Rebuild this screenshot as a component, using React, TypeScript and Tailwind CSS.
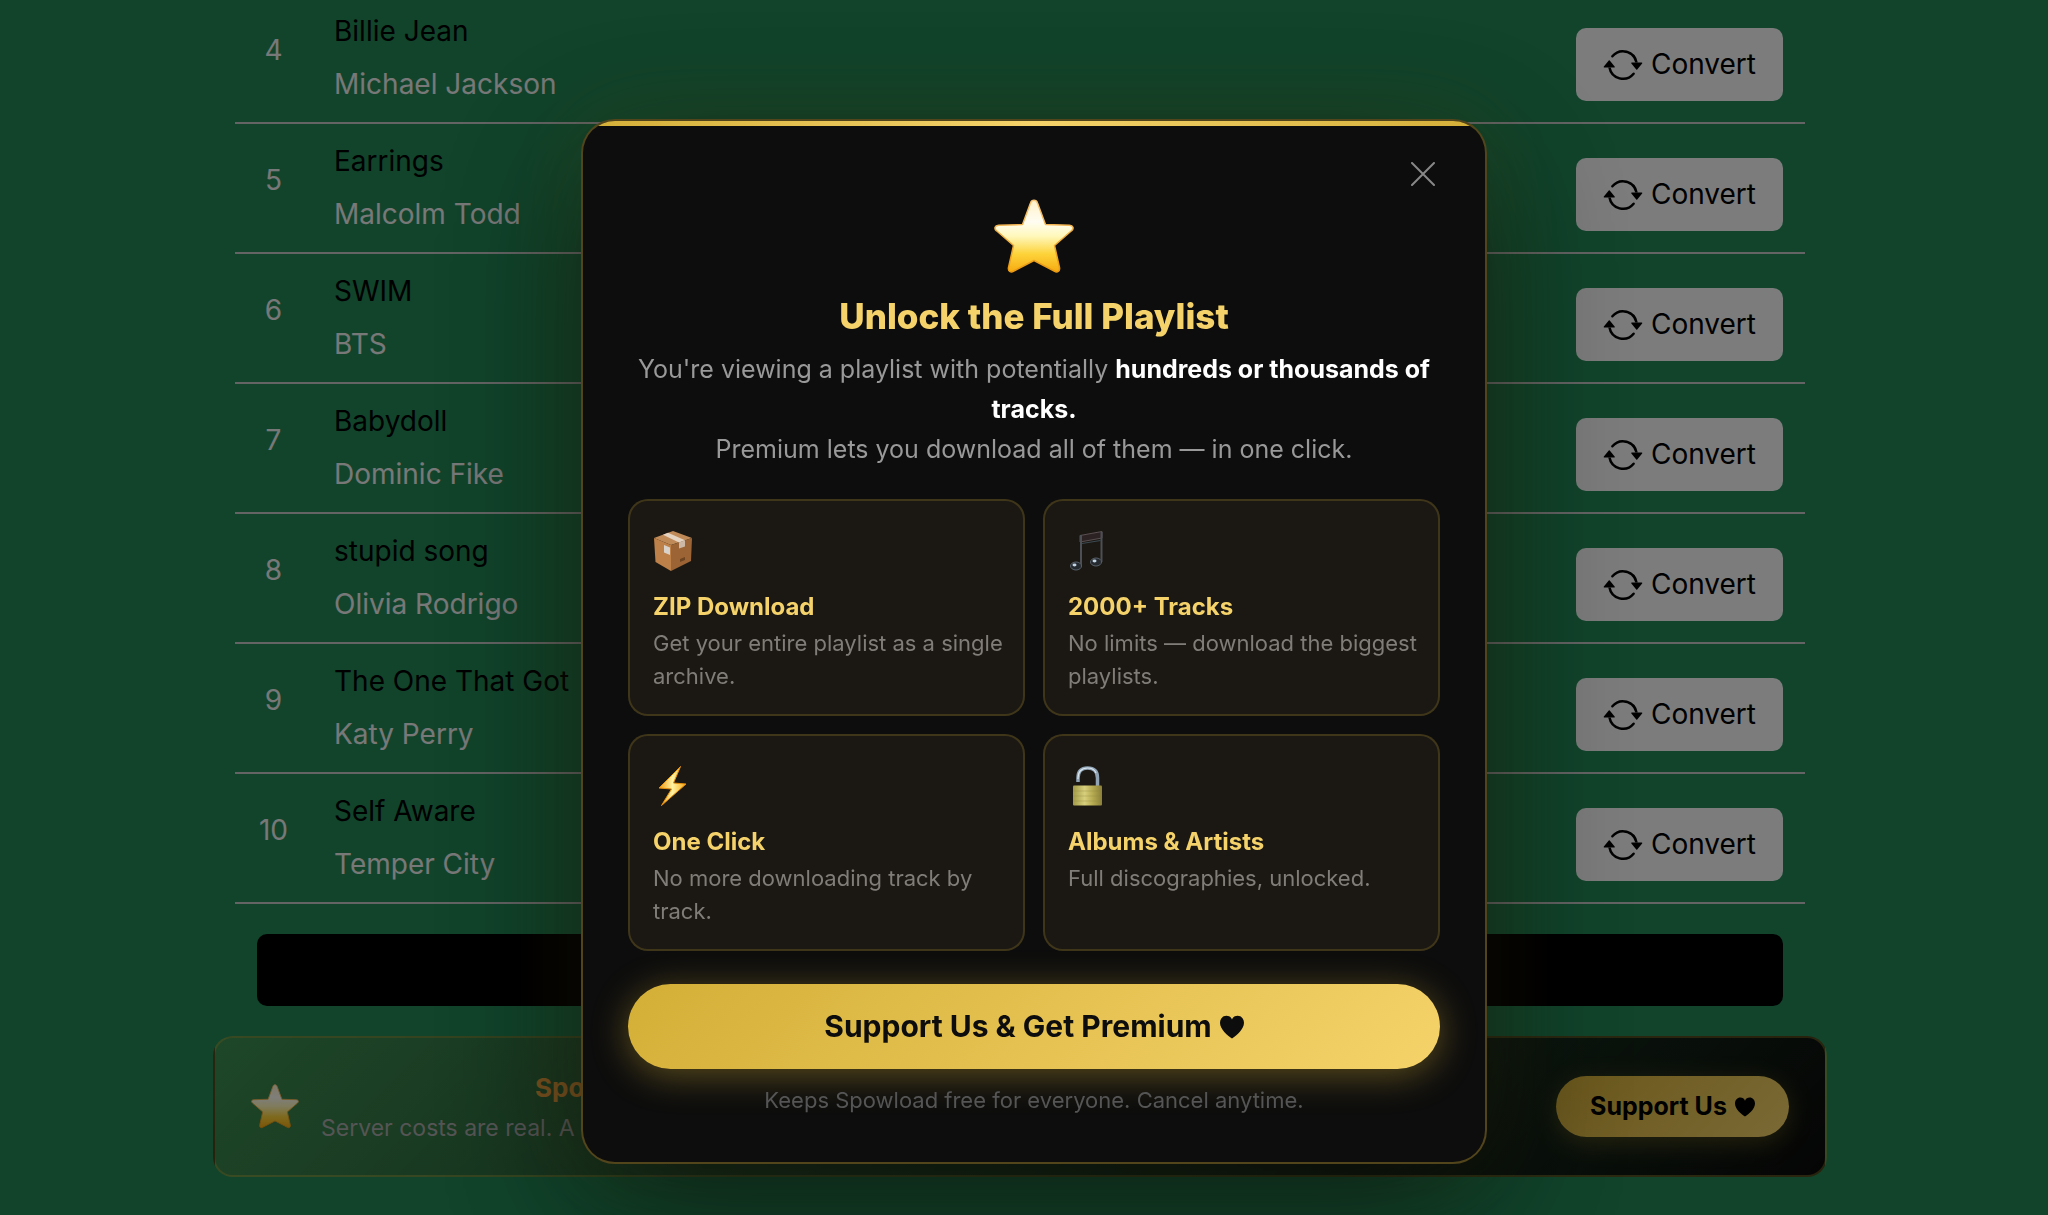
import React, { useState } from 'react';
import { BsArrowRepeat } from 'react-icons/bs';

interface Track {
  id: number;
  title: string;
  artist: string;
}

const tracks: Track[] = [
  { id: 4, title: 'Billie Jean', artist: 'Michael Jackson' },
  { id: 5, title: 'Earrings', artist: 'Malcolm Todd' },
  { id: 6, title: 'SWIM', artist: 'BTS' },
  { id: 7, title: 'Babydoll', artist: 'Dominic Fike' },
  { id: 8, title: 'stupid song', artist: 'Olivia Rodrigo' },
  { id: 9, title: 'The One That Got', artist: 'Katy Perry' },
  { id: 10, title: 'Self Aware', artist: 'Temper City' },
];

const StarIcon = ({ className }: { className?: string }) => (
  <svg viewBox="0 0 80 74" className={className} aria-hidden="true">
    <defs>
      <linearGradient id="star-fill" x1="0" y1="0" x2="0" y2="1">
        <stop offset="0" stopColor="#fff0c8" />
        <stop offset="0.3" stopColor="#fffdf2" />
        <stop offset="0.5" stopColor="#fff8bc" />
        <stop offset="0.75" stopColor="#fdd33a" />
        <stop offset="1" stopColor="#f7ab12" />
      </linearGradient>
      <linearGradient id="star-edge" x1="0" y1="0" x2="0" y2="1">
        <stop offset="0" stopColor="#f6c273" />
        <stop offset="1" stopColor="#ea9a10" />
      </linearGradient>
    </defs>
    <path
      d="M36.500 4C37.700 .3 42.300 .3 43.500 4L51.500 25.500L75.500 26.200C79.200 26.400 80.200 29.600 77.500 31.800L60.500 46.500L65.500 68.500C66.200 72.300 63.300 74 60.200 72L40 61.500L19.800 72C16.700 74 13.800 72.300 14.500 68.500L19.500 46.500L2.500 31.800C-.2 29.600 .8 26.400 4.500 26.200L28.500 25.500Z"
      fill="url(#star-fill)"
      stroke="url(#star-edge)"
      strokeWidth="1.500"
      strokeLinejoin="round"
    />
  </svg>
);

const HeartIcon = ({ className }: { className?: string }) => (
  <svg viewBox="0 0 24 24" fill="currentColor" className={className} aria-hidden="true">
    <path d="M12 23.500C7.500 20.500 0 14.500 0 7.800C0 3.600 2.900 .7 6.400 .7C9 .7 11.100 2.100 12 4.500C12.900 2.100 15 .7 17.600 .7C21.100 .7 24 3.600 24 7.800C24 14.500 16.500 20.500 12 23.500Z" />
  </svg>
);

const PackageIcon = () => (
  <svg viewBox="0 0 40 40" className="size-10" aria-hidden="true">
    <path d="M1 7L20 0L39 7L18 14Z" fill="#c08a58" />
    <path d="M1 7L18 14V40L2.500 31Z" fill="#bd8049" />
    <path d="M39 7L18 14V40L38 30Z" fill="#9c6434" />
    <path d="M10 3.700L15 1.800L32 9.200L26 11.400Z" fill="#e5d3c2" />
    <path d="M26 11.400L32 9.200V15.500L26 17.500Z" fill="#cdb8a5" />
    <path d="M11 14L17 16.500V24L11 21.500Z" fill="#d9d2cb" />
    <path d="M27 28L32 26V29L27 31Z" fill="#6f4421" />
  </svg>
);

const MusicIcon = () => (
  <svg viewBox="0 0 40 40" className="size-10" aria-hidden="true">
    <path d="M12 4.500L34 .5V7L12 11Z" fill="#2c2224" stroke="#5a5052" strokeWidth="1" />
    <path d="M13 4V35M33.500 1V31" stroke="#4c4f54" strokeWidth="2" fill="none" />
    <path d="M14 12.500L32.500 9.500" stroke="#3b4a51" strokeWidth="1" />
    <ellipse cx="8" cy="35" rx="5.500" ry="4" fill="#252a31" stroke="#596069" strokeWidth="1" />
    <ellipse cx="28" cy="31" rx="5.500" ry="4" fill="#252a31" stroke="#596069" strokeWidth="1" />
    <ellipse cx="6.500" cy="34" rx="2" ry="1.400" fill="#c3d4e2" />
    <ellipse cx="26.500" cy="30" rx="2" ry="1.400" fill="#c3d4e2" />
  </svg>
);

const BoltIcon = () => (
  <svg viewBox="0 0 40 40" className="size-10" aria-hidden="true">
    <defs>
      <linearGradient id="bolt" x1="0" y1="0" x2="1" y2="0">
        <stop offset="0" stopColor="#f39a12" />
        <stop offset="0.5" stopColor="#fff2a0" />
        <stop offset="1" stopColor="#f8a916" />
      </linearGradient>
    </defs>
    <path
      d="M27.500 .5L6 22L18.500 23L8.500 39.500L33 18L20.500 17Z"
      fill="url(#bolt)"
      stroke="#e88f0c"
      strokeWidth="1"
      strokeLinejoin="round"
    />
  </svg>
);

const LockIcon = () => (
  <svg viewBox="0 0 40 40" className="size-10" aria-hidden="true">
    <defs>
      <linearGradient id="brass" x1="0" y1="0" x2="1" y2="0">
        <stop offset="0" stopColor="#a39a48" />
        <stop offset="0.4" stopColor="#d8cf7c" />
        <stop offset="0.7" stopColor="#b3a84f" />
        <stop offset="1" stopColor="#8a7f37" />
      </linearGradient>
    </defs>
    <path d="M10 16V12Q10 2 19.500 2Q29.500 2 29.500 12V20" fill="none" stroke="#8fa3b5" strokeWidth="3.500" />
    <path d="M10 13Q10 2 19.500 2Q26 2 28 7" fill="none" stroke="#dbe6ef" strokeWidth="1.200" />
    <rect x="5" y="19.500" width="29" height="20" rx="1" fill="url(#brass)" />
    <path d="M5 25H34M5 30H34M5 35H34" stroke="#8f8540" strokeWidth="0.600" opacity="0.600" />
  </svg>
);

const features = [
  { icon: <PackageIcon />, title: 'ZIP Download', text: 'Get your entire playlist as a single archive.' },
  { icon: <MusicIcon />, title: '2000+ Tracks', text: 'No limits — download the biggest playlists.' },
  { icon: <BoltIcon />, title: 'One Click', text: 'No more downloading track by track.' },
  { icon: <LockIcon />, title: 'Albums & Artists', text: 'Full discographies, unlocked.' },
];

const TrackTable = () => (
  <table className="w-full border-separate border-spacing-0 text-[28px] leading-[53px]">
    <tbody>
      {tracks.map((track) => (
        <tr key={track.id} className="h-[130px] align-top">
          <td className="w-[77px] border-b-2 border-[#c8c8c8] pt-[30px] text-center text-[#f0f0f0]">{track.id}</td>
          <td className="border-b-2 border-[#c8c8c8] pt-[11px] pl-[22px]">
            <p className="text-black">{track.title}</p>
            <p className="text-[#f0f0f0]">{track.artist}</p>
          </td>
          <td className="border-b-2 border-[#c8c8c8] pt-[34px] pr-[22px]">
            <button className="ml-auto flex h-[73px] w-[207px] items-center justify-center gap-2 rounded-[10px] bg-[#f8f8f8] text-black">
              <BsArrowRepeat size={40} />
              Convert
            </button>
          </td>
        </tr>
      ))}
    </tbody>
  </table>
);

const SupportBanner = () => (
  <section className="mt-[30px] flex h-[141px] items-center rounded-[20px] border-2 border-[#d4af37]/35 bg-[linear-gradient(135deg,rgba(212,175,55,0.15)_0%,#0a0a0a_100%)] px-9">
    <StarIcon className="w-12 shrink-0" />
    <div className="ml-[22px] min-w-0 flex-1 overflow-hidden pt-0.5 whitespace-nowrap">
      <h3 className="pl-[214px] text-[26px] leading-10 font-bold text-[#f5a742]">Spowload Premium</h3>
      <p className="text-[23px] leading-10 text-[#aaaaaa]">Server costs are real. A small contribution keeps us online.</p>
    </div>
    <button className="flex h-[61px] w-[233px] shrink-0 items-center justify-center gap-2 rounded-full bg-[linear-gradient(135deg,#d4af37,#f5d36a)] text-[25px] font-bold text-black shadow-[0_6px_24px_rgba(212,175,55,0.3)]">
      Support Us
      <HeartIcon className="size-5" />
    </button>
  </section>
);

const PremiumModal = ({ onClose }: { onClose: () => void }) => (
  <div className="fixed inset-0 flex items-start justify-center overflow-hidden bg-black/50 pt-[119px] pl-5">
    <div
      role="dialog"
      aria-modal="true"
      aria-labelledby="premium-title"
      className="relative w-full max-w-[906px] rounded-[34px] border-2 border-[#d4af37]/35 bg-[#0d0d0d] px-[45px] pt-[78px] pb-[46px] text-center shadow-[0_40px_140px_rgba(0,0,0,0.6),0_0_100px_rgba(212,175,55,0.1)]"
    >
      <div className="absolute inset-0 overflow-hidden rounded-[32px]">
        <div className="h-[5px] bg-linear-to-r from-[#d4af37] via-[#f5d36a] to-[#d4af37]" />
      </div>
      <button aria-label="Close" onClick={onClose} className="absolute top-[41px] right-[50px] p-0 text-[#888888]">
        <svg viewBox="0 0 24 24" className="size-6" fill="none" stroke="currentColor" strokeWidth="2" strokeLinecap="round">
          <path d="M1 1L23 23M23 1L1 23" />
        </svg>
      </button>

      <StarIcon className="relative mx-auto w-20" />
      <h2 id="premium-title" className="relative mt-[19px] text-[35px] leading-[48px] font-extrabold text-[#f5d36a]">
        Unlock the Full Playlist
      </h2>
      <p className="relative mt-[9px] text-[25px] leading-10 text-[#999999]">
        You're viewing a playlist with potentially <strong className="font-bold text-white">hundreds or thousands of tracks.</strong>
        <br />
        Premium lets you download all of them — in one click.
      </p>

      <div className="relative mt-[30px] grid grid-cols-2 gap-[18px] text-left">
        {features.map((feature) => (
          <div key={feature.title} className="h-[217px] rounded-[20px] border-2 border-[#d4af37]/20 bg-[#1b1813] pt-[30px] pr-3 pl-[23px]">
            {feature.icon}
            <h3 className="mt-[19px] text-2xl leading-[34px] font-bold text-[#f5d36a]">{feature.title}</h3>
            <p className="mt-[3px] text-[22px] leading-[33px] text-[#807c78]">{feature.text}</p>
          </div>
        ))}
      </div>

      <button className="relative mt-[33px] flex h-[85px] w-full items-center justify-center gap-2 rounded-full bg-[linear-gradient(135deg,#d4af37,#f5d36a)] text-[30px] font-bold text-[#0d0d0d] shadow-[0_6px_36px_rgba(212,175,55,0.4)]">
        Support Us &amp; Get Premium
        <HeartIcon className="size-6" />
      </button>
      <p className="relative mt-[15px] text-[22px] leading-8 text-[#555555]">Keeps Spowload free for everyone. Cancel anytime.</p>
    </div>
  </div>
);

const App: React.FC = () => {
  const [modalOpen, setModalOpen] = useState(true);

  return (
    <div className="flow-root h-screen overflow-hidden bg-[#228856] pr-2 font-['Inter','Noto_Sans',sans-serif]">
      <main className="mx-auto -mt-[6px] max-w-[1614px]">
        <div className="px-[22px]">
          <TrackTable />
          <div className="px-[22px] pt-[30px]">
            <button aria-label="Load more" className="block h-[72px] w-full rounded-[10px] bg-black" />
          </div>
        </div>
        <SupportBanner />
      </main>
      {modalOpen && <PremiumModal onClose={() => setModalOpen(false)} />}
    </div>
  );
};

export default App;
